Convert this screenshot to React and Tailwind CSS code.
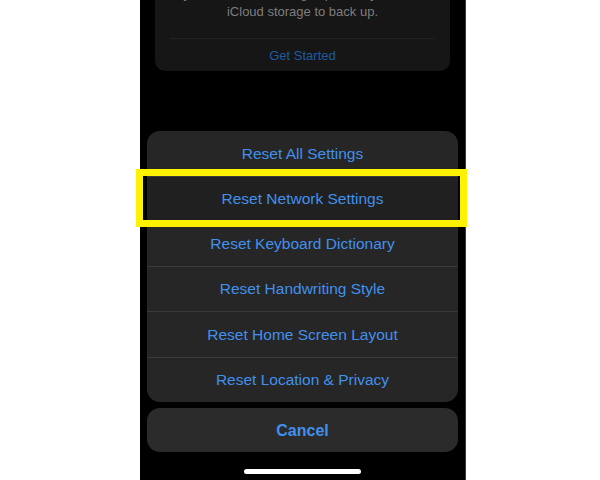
import React from "react";

const rows = [
  "Reset All Settings",
  "Reset Network Settings",
  "Reset Keyboard Dictionary",
  "Reset Handwriting Style",
  "Reset Home Screen Layout",
  "Reset Location & Privacy",
];

export default function App() {
  return (
    <div className="w-[600px] h-[480px] bg-white relative overflow-hidden" style={{ fontFamily: '"Liberation Sans", Arial, sans-serif' }}>
      <div className="ml-[140px] w-[326px] h-[480px] bg-black flex flex-col overflow-hidden border-r border-[#3a3a3a]">
        {/* dimmed card */}
        <div className="mx-[15px] mt-[-30px] h-[101px] rounded-[10px] bg-[#161616] flex flex-col">
          <div className="pt-[15px] text-center text-[13px] leading-[18px] text-[#7d7d7d]">
            <div>you don't have enough space in your free</div>
            <div>iCloud storage to back up.</div>
          </div>
          <div className="mt-[17px] mx-[15px] border-t border-[#222222]"></div>
          <div className="flex-1 pt-[2px] flex items-center justify-center text-[13px] text-[#1d5aa0]">Get Started</div>
        </div>

        {/* action sheet */}
        <div className="mx-[7px] mt-[60px] rounded-[13px] bg-[#262626] overflow-hidden flex flex-col">
          {rows.map((r, i) => (
            <div
              key={r}
              className={
                "flex items-center justify-center text-[15.5px] text-[#4190ec] h-[45px] " +
                (i === 0 ? "" : "border-t border-[#3a3a3a] ") +
                (i === 1 ? "bg-[#202020] " : "") +
                (i === 4 ? "h-[46px] " : "")
              }
            >
              {r}
            </div>
          ))}
        </div>

        {/* cancel */}
        <div className="mx-[7px] mt-[6px] h-[44px] rounded-[13px] bg-[#2b2b2b] flex items-center justify-center text-[16px] font-bold text-[#4190ec] pt-[1px]">
          Cancel
        </div>

        <div className="mt-[17px] mx-auto w-[117px] h-[5px] rounded-full bg-white"></div>
      </div>

      {/* yellow highlight */}
      <div className="absolute left-[136px] top-[169px] w-[331px] h-[58px] border-[7px] border-[#fff200]"></div>
    </div>
  );
}
